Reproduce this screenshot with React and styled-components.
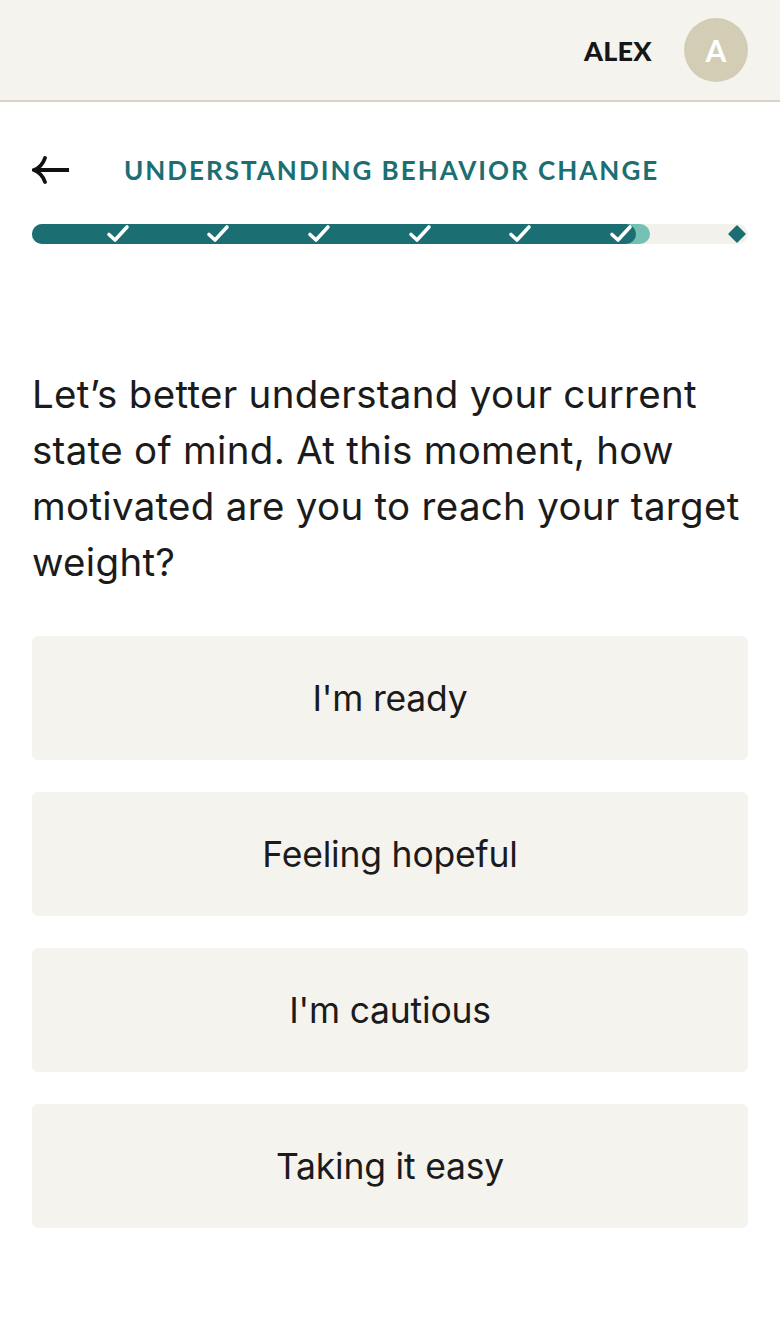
import React from 'react';
import styled, { createGlobalStyle } from 'styled-components';

const GlobalStyle = createGlobalStyle`
  html, body {
    margin: 0;
    padding: 0;
    background: #ffffff;
  }
  body {
    font-family: Inter, "Noto Sans", sans-serif;
    color: #1b1b1b;
  }
`;

const Page = styled.div`
  width: 780px;
  min-height: 1326px;
  background: #ffffff;
`;

const Header = styled.header`
  height: 100px;
  background: #f5f3ee;
  border-bottom: 2px solid #d7d2c2;
  display: flex;
  align-items: center;
  justify-content: flex-end;
  gap: 32px;
  padding: 0 32px;
`;

const UserName = styled.span`
  font-family: Lato, sans-serif;
  font-weight: 900;
  font-size: 27px;
  letter-spacing: 0.3px;
  color: #161616;
`;

const Avatar = styled.div`
  width: 64px;
  height: 64px;
  border-radius: 50%;
  background: #d4cdb6;
  color: #ffffff;
  display: flex;
  align-items: center;
  justify-content: center;
  font-family: Lato, sans-serif;
  font-weight: 700;
  font-size: 30px;
`;

const Main = styled.main`
  padding: 0 32px;
`;

const TitleRow = styled.div`
  display: flex;
  align-items: center;
  gap: 54px;
  height: 36px;
  margin-top: 50px;
`;

const BackButton = styled.button`
  border: none;
  background: none;
  padding: 0;
  width: 38px;
  height: 30px;
  display: flex;
  align-items: center;
  cursor: pointer;
`;

const Title = styled.h1`
  margin: 0;
  font-family: Lato, sans-serif;
  font-weight: 700;
  font-size: 26px;
  letter-spacing: 2px;
  color: #1b6e72;
`;

const Track = styled.div`
  position: relative;
  margin-top: 36px;
  height: 20px;
  border-radius: 10px;
  background: #f3f1ec;
`;

const Fill = styled.div`
  position: absolute;
  left: 0;
  top: 0;
  bottom: 0;
  border-radius: 10px;
  background: ${({ $light }) => ($light ? '#74c0b5' : '#1b6e72')};
`;

const Marker = styled.div`
  position: absolute;
  top: 0;
  width: 26px;
  height: 20px;
  margin-left: -13px;
  display: flex;
  align-items: center;
  justify-content: center;
`;

const Question = styled.p`
  margin: 122px 0 0;
  font-size: 38.5px;
  line-height: 56px;
  letter-spacing: 0.3px;
  color: #1b1b1b;
`;

const Options = styled.div`
  display: flex;
  flex-direction: column;
  gap: 32px;
  margin-top: 46px;
`;

const Option = styled.button`
  height: 124px;
  border: none;
  border-radius: 6px;
  background: #f5f3ee;
  font-family: Inter, "Noto Sans", sans-serif;
  font-size: 35.5px;
  letter-spacing: -0.2px;
  color: #1b1b1b;
  cursor: pointer;
`;

const checks = [86, 186, 287, 388, 488, 589];
const options = ["I'm ready", 'Feeling hopeful', "I'm cautious", 'Taking it easy'];

function Check() {
  return (
    <svg width="24" height="20" viewBox="0 0 24 20">
      <path d="M3 10.5 L9 16 L21 3" fill="none" stroke="#ffffff" strokeWidth="3.6" strokeLinecap="round" strokeLinejoin="round" />
    </svg>
  );
}

function App() {
  return (
    <Page>
      <GlobalStyle />
      <Header>
        <UserName>ALEX</UserName>
        <Avatar>A</Avatar>
      </Header>
      <Main>
        <TitleRow>
          <BackButton aria-label="Back">
            <svg width="38" height="30" viewBox="0 0 38 30">
              <path d="M4 15 H37" stroke="#111" strokeWidth="3.8" fill="none" />
              <path d="M13 3 C11 9 7 13 2 15 C7 17 11 21 13 27" stroke="#111" strokeWidth="3.8" fill="none" strokeLinecap="round" />
            </svg>
          </BackButton>
          <Title>UNDERSTANDING BEHAVIOR CHANGE</Title>
        </TitleRow>
        <Track>
          <Fill $light style={{ width: '618px' }} />
          <Fill style={{ width: '604px' }} />
          {checks.map((x) => (
            <Marker key={x} style={{ left: x }}>
              <Check />
            </Marker>
          ))}
          <Marker style={{ left: 705 }}>
            <svg width="20" height="20" viewBox="0 0 20 20">
              <path d="M10 2 L18 10 L10 18 L2 10 Z" fill="#1b6e72" strokeLinejoin="round" stroke="#1b6e72" strokeWidth="1.5" />
            </svg>
          </Marker>
        </Track>
        <Question>
          Let’s better understand your current state of mind. At this moment, how motivated are you to reach your target weight?
        </Question>
        <Options>
          {options.map((o) => (
            <Option key={o}>{o}</Option>
          ))}
        </Options>
      </Main>
    </Page>
  );
}

export default App;
